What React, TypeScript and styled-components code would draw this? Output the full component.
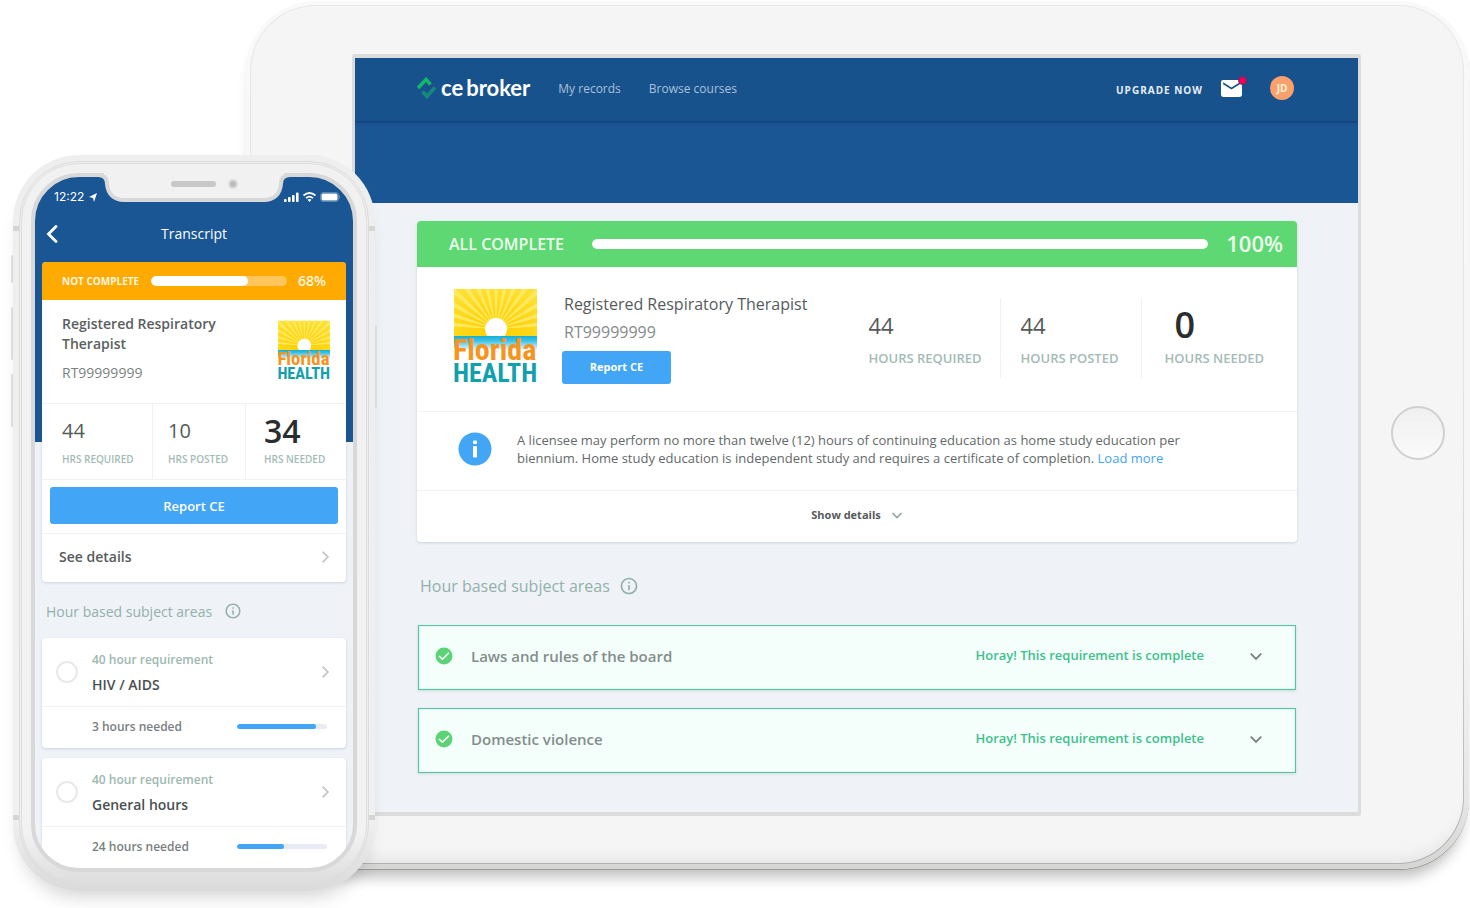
import React from "react";
import styled, { createGlobalStyle } from "styled-components";
import { MdInfoOutline } from "react-icons/md";

const blue = "#1a5694";
const mist = "#eff3f8";
const sky = "#42a5f5";
const sage = "#93b0aa";
const ink = "#555b5b";
const line = "#f0f2f3";

const GlobalStyle = createGlobalStyle`
  *, *::before, *::after { box-sizing: border-box; }
  body { margin: 0; background: #fff; font-family: "Open Sans", "Noto Sans", sans-serif; color: ${ink}; }
  button, input { font: inherit; color: inherit; margin: 0; }
  button { border: 0; background: none; padding: 0; cursor: pointer; }
  h1, h2, h3, p, dl, dt, dd { margin: 0; font-weight: 400; }
  a { text-decoration: none; color: inherit; }
  svg { display: block; flex: none; }
`;

const Stage = styled.main`
  display: flex;
  align-items: flex-start;
  min-height: 100vh;
  padding: 1px 1px 0 13px;
  overflow: hidden;
`;

/* ---------- tablet ---------- */

const TabletRim = styled.section`
  flex: 1;
  min-width: 0;
  padding: 4px 5px 5px 4px;
  border-radius: 70px;
  background: linear-gradient(#f9f9f9 0%, #f6f6f6 70%, #e6e6e6 92%, #d6d7d4 99%);
  box-shadow: 0 1px 0 #9a9a98, 0 14px 14px -6px rgba(0, 0, 0, 0.26);
`;

const TabletEdge = styled.div`
  padding: 1px;
  border-radius: 66px;
  background: linear-gradient(#e8e8e8 0%, #e2e2e2 50%, #bdbdbd 90%, #b0b0b0 100%);
`;

const TabletFace = styled.div`
  display: flex;
  align-items: center;
  padding: 48px 0 47px 101px;
  border-radius: 65px;
  background: #f5f5f5;
  box-shadow: inset 0 -14px 14px -8px rgba(0, 0, 0, 0.06);
`;

const TabletScreen = styled.div`
  flex: 1;
  min-width: 0;
  padding-bottom: 39px;
  border: 3px solid #dcdcdc;
  border-top-width: 4px;
  border-bottom-width: 4px;
  border-radius: 3px;
  background: ${mist};
`;

const TabletBezel = styled.div`
  display: flex;
  justify-content: center;
  width: 102px;
  padding: 0 0 4px 12px;
`;

const HomeButton = styled.button`
  width: 54px;
  height: 54px;
  border: 2px solid #d0d0d0;
  border-radius: 50%;
  background: linear-gradient(#f0f0f0, #fafafa);
`;

const NavBar = styled.header`
  display: flex;
  align-items: center;
  justify-content: space-between;
  height: 63px;
  padding: 0 64px 3px 62px;
  background: #18528d;
  box-shadow: 0 1px 3px rgba(0, 20, 60, 0.45);
  clip-path: inset(0 0 -6px 0);
  position: relative;
`;

const NavGroup = styled.nav`
  display: flex;
  align-items: center;
  gap: 28px;
`;

const Brand = styled.a`
  display: flex;
  align-items: center;
  gap: 5px;
  font: 700 22px/24px Lato, sans-serif;
  color: #fff;
`;

const BrandTail = styled.span`
  margin-left: 3px;
`;

const NavLink = styled.a`
  padding-top: 1px;
  font-size: 12px;
  line-height: 16px;
  color: #a9c0da;
`;

const Upgrade = styled.a`
  padding-top: 4px;
  font-size: 10px;
  line-height: 14px;
  font-weight: 700;
  letter-spacing: 1px;
  color: #e6eef7;
`;

const Account = styled.div`
  display: flex;
  align-items: center;
`;

const Mail = styled.button`
  position: relative;
  margin: 0 28px 0 18px;
`;

const MailDot = styled.span`
  position: absolute;
  top: -4px;
  right: -5px;
  width: 9px;
  height: 9px;
  border: 1px solid #5b2f72;
  border-radius: 50%;
  background: #f50057;
`;

const Avatar = styled.button`
  width: 24px;
  height: 24px;
  border-radius: 50%;
  background: #f9a06c;
  color: #fff3d6;
  font-size: 10px;
  font-weight: 700;
  line-height: 24px;
  text-align: center;
`;

const Hero = styled.div`
  height: 82px;
  background: ${blue};
`;

const TabletBody = styled.div`
  padding: 18px 61px 0 62px;
`;

const Card = styled.article`
  border-radius: 4px;
  background: #fff;
  box-shadow: 0 1px 3px rgba(60, 80, 110, 0.2);
  overflow: hidden;
`;

const StatusHead = styled.header<{ $tone: "done" | "open" }>`
  display: flex;
  align-items: center;
  height: ${(p) => (p.$tone === "done" ? 46 : 38)}px;
  padding: ${(p) => (p.$tone === "done" ? "0 14px 0 32px" : "0 20px")};
  gap: ${(p) => (p.$tone === "done" ? "0 18px" : "0 11px")};
  background: ${(p) => (p.$tone === "done" ? "#5dd872" : "#ffaa00")};
  color: #fff;
`;

const StatusName = styled.span<{ $big?: boolean }>`
  font-size: ${(p) => (p.$big ? 16 : 10)}px;
  line-height: 20px;
  padding-bottom: ${(p) => (p.$big ? 1 : 0)}px;
  font-weight: ${(p) => (p.$big ? 600 : 700)};
  margin-right: ${(p) => (p.$big ? 10 : 1)}px;
  color: ${(p) => (p.$big ? "#effff0" : "#fff6e2")};
`;

const StatusPercent = styled.span<{ $big?: boolean }>`
  font-size: ${(p) => (p.$big ? 22 : 14)}px;
  line-height: ${(p) => (p.$big ? 28 : 20)}px;
  padding-bottom: ${(p) => (p.$big ? 3 : 0)}px;
  font-weight: 600;
  color: ${(p) => (p.$big ? "#effff0" : "#fff6e2")};
`;

const Track = styled.div<{ $size: number; $color: string }>`
  flex: 1;
  height: ${(p) => p.$size}px;
  border-radius: 5px;
  background: ${(p) => p.$color};
  overflow: hidden;
`;

const Fill = styled.div<{ $color: string }>`
  height: 100%;
  border-radius: 5px;
  background: ${(p) => p.$color};
`;

const Summary = styled.div`
  display: flex;
  height: 144px;
  padding: 22px 0 0 37px;
`;

const Profile = styled.div`
  display: flex;
  flex-direction: column;
  align-items: flex-start;
  padding-top: 1px;
  margin-left: 25px;
`;

const ProfileText = styled.p<{ $soft?: boolean }>`
  padding: 0 2px;
  font-size: 16px;
  line-height: 28px;
  color: ${(p) => (p.$soft ? "#858a8a" : ink)};
`;

const ReportButton = styled.button<{ $wide?: boolean }>`
  width: ${(p) => (p.$wide ? "auto" : "109px")};
  height: ${(p) => (p.$wide ? 37 : 33)}px;
  margin: ${(p) => (p.$wide ? "7px 8px 9px" : "5px 0 0")};
  padding-bottom: ${(p) => (p.$wide ? 0 : 2)}px;
  border-radius: 3px;
  background: ${sky};
  color: #fff;
  font-size: ${(p) => (p.$wide ? 13 : 11)}px;
  font-weight: ${(p) => (p.$wide ? 600 : 700)};
`;

const Stats = styled.dl`
  display: flex;
  height: 80px;
  margin: 9px 33px 0 auto;
`;

const Stat = styled.div`
  display: flex;
  flex-direction: column-reverse;
  justify-content: flex-end;
  padding: 7px 22px 0 20px;
  &:first-child { padding-right: 18px; }
  &:last-child { padding-right: 0; padding-left: 23px; }
  & + & { border-left: 1px solid ${line}; }
`;

const StatLabel = styled.dt`
  padding-top: 7px;
  font-size: 13px;
  line-height: 18px;
  font-weight: 600;
  color: #a3bbb6;
`;

const StatValue = styled.dd<{ $strong?: boolean }>`
  height: 37px;
  padding-left: ${(p) => (p.$strong ? 10 : 0)}px;
  font-size: ${(p) => (p.$strong ? 36 : 22)}px;
  font-weight: ${(p) => (p.$strong ? 600 : 400)};
  line-height: 40px;
  color: ${(p) => (p.$strong ? "#2b2e2e" : ink)};
`;

const Notice = styled.div`
  display: flex;
  align-items: center;
  gap: 25px;
  height: 79px;
  padding: 0 100px 4px 41px;
  border-top: 1px solid ${line};
  font-size: 13px;
  line-height: 18px;
  color: #636969;
`;

const LoadMore = styled.a`
  color: ${sky};
`;

const ShowDetails = styled.button`
  display: flex;
  align-items: center;
  justify-content: center;
  gap: 10px;
  width: 100%;
  height: 52px;
  padding-bottom: 4px;
  border-top: 1px solid ${line};
  font-size: 11px;
  font-weight: 700;
`;

const SectionTitle = styled.h2<{ $small?: boolean }>`
  display: flex;
  align-items: center;
  gap: ${(p) => (p.$small ? 12 : 9)}px;
  height: ${(p) => (p.$small ? 56 : 83)}px;
  padding: 0 ${(p) => (p.$small ? 4 : 3)}px;
  padding-top: ${(p) => (p.$small ? 2 : 4)}px;
  font-size: ${(p) => (p.$small ? 14 : 16)}px;
  color: ${sage};
`;

const AreaList = styled.div`
  display: flex;
  flex-direction: column;
  gap: 18px;
  padding: 0 1px;
`;

const AreaRow = styled.button`
  display: flex;
  align-items: center;
  height: 65px;
  padding: 0 32px 4px 16px;
  border: 1px solid #55c4a0;
  background: #f4fffb;
  box-shadow: 0 1px 3px rgba(60, 120, 110, 0.2), inset 0 0 1px #55c4a0;
  text-align: left;
`;

const AreaName = styled.span`
  flex: 1;
  padding-left: 18px;
  font-size: 15px;
  font-weight: 600;
  color: #838d8b;
`;

const AreaState = styled.span`
  margin-right: 45px;
  padding-bottom: 2px;
  font-size: 13px;
  line-height: 18px;
  font-weight: 600;
  color: #3fc08c;
`;

/* ---------- phone ---------- */

const PhoneShell = styled.section`
  position: relative;
  flex: none;
  z-index: 1;
  width: 362px;
  margin: 154px -129px 0 0;
  padding: 6px;
  border-radius: 66px;
  background: linear-gradient(#eeeeee 0%, #f0f0f0 90%, #dadada 100%);
  box-shadow: 0 14px 20px -10px rgba(0, 0, 0, 0.2);
`;

const PhoneBand = styled.div`
  padding: 1px;
  border: 1px solid #dcdcdc;
  border-radius: 60px;
`;

const PhoneFace = styled.div`
  padding: 9px 9px 10px;
  border: 1px solid #dedede;
  border-radius: 58px;
  background: linear-gradient(#f1f1f1 0%, #f2f2f2 93%, #dedede 100%);
`;

const PhoneScreen = styled.div`
  height: 699px;
  border: 4px solid #d8d8d8;
  border-radius: 48px;
  background: linear-gradient(${blue} 265px, ${mist} 265px);
  overflow: hidden;
`;

const Notch = styled.svg`
  position: absolute;
  top: 17px;
  left: 83px;
`;

const SideKey = styled.span<{ $side: "left" | "right"; $top: number; $height: number }>`
  position: absolute;
  ${(p) => p.$side}: -2px;
  top: ${(p) => p.$top}px;
  width: 2px;
  height: ${(p) => p.$height}px;
  border-radius: 2px;
  background: #dcdcdc;
`;

const Antenna = styled.span<{ $side: "left" | "right"; $top: number }>`
  position: absolute;
  ${(p) => p.$side}: 0;
  top: ${(p) => p.$top}px;
  width: 6px;
  height: 5px;
  background: #d4d6d4;
`;

const PhoneStatus = styled.div`
  display: flex;
  align-items: center;
  justify-content: space-between;
  height: 40px;
  padding: 0 13px 0 19px;
  color: #fff;
  font: 400 12px/16px Inter, sans-serif;
`;

const IconRow = styled.span`
  display: flex;
  align-items: center;
  gap: 5px;
`;

const PhoneTitle = styled.div`
  display: grid;
  grid-template-columns: 18px 1fr 18px;
  align-items: center;
  height: 45px;
  padding: 0 10px 11px;
  color: #fff;
  font-size: 14px;
`;

const TitleText = styled.h1`
  font-size: 14px;
  line-height: 20px;
  font-weight: 400;
  text-align: center;
`;

const PhoneBody = styled.div`
  padding: 0 7px;
`;

const PhoneProfile = styled.div`
  display: flex;
  justify-content: space-between;
  height: 103px;
  padding: 14px 16px 0 20px;
`;

const PhoneName = styled.h2`
  width: 170px;
  font-size: 14px;
  line-height: 20px;
  font-weight: 600;
  color: #5a6060;
`;

const PhoneCode = styled.p`
  padding-top: 9px;
  font-size: 14px;
  line-height: 20px;
  color: #7c8282;
`;

const LogoSlot = styled.div`
  padding-top: 6px;
`;

const PhoneStats = styled.dl`
  display: grid;
  grid-template-columns: 110px 93px 1fr;
  height: 77px;
  border-top: 1px solid ${line};
  border-bottom: 1px solid ${line};
`;

const PhoneStat = styled.div`
  display: flex;
  flex-direction: column-reverse;
  justify-content: flex-end;
  padding: 7px 0 0 15px;
  &:first-child { padding-left: 20px; }
  &:last-child { padding-left: 18px; }
  & + & { border-left: 1px solid ${line}; }
`;

const PhoneStatLabel = styled.dt`
  font-size: 10px;
  line-height: 16px;
  font-weight: 600;
  padding-top: 2px;
  color: #a3bbb6;
`;

const PhoneStatValue = styled.dd<{ $strong?: boolean }>`
  height: 38px;
  font-size: ${(p) => (p.$strong ? 32 : 20)}px;
  font-weight: ${(p) => (p.$strong ? 600 : 400)};
  line-height: 40px;
  color: ${(p) => (p.$strong ? "#2b2e2e" : ink)};
`;

const PhoneActions = styled.div`
  display: grid;
`;

const SeeDetails = styled.button`
  display: flex;
  align-items: center;
  justify-content: space-between;
  width: 100%;
  height: 49px;
  padding: 0 14px 2px 17px;
  border-top: 1px solid ${line};
  font-size: 14px;
  line-height: 18px;
  font-weight: 600;
`;

const PhoneList = styled.div`
  display: flex;
  flex-direction: column;
  gap: 10px;
`;

const AreaTop = styled.div`
  display: flex;
  align-items: center;
  height: 68px;
  padding: 0 14px;
`;

const Tick = styled.input`
  appearance: none;
  flex: none;
  width: 22px;
  height: 22px;
  border: 2px solid #e6e9ec;
  border-radius: 50%;
  background: #fff;
`;

const AreaLabel = styled.label`
  flex: 1;
  padding: 0 0 0 14px;
`;

const AreaNeed = styled.span`
  display: block;
  font-size: 12px;
  line-height: 25px;
  font-weight: 600;
  color: #9db7b1;
`;

const AreaTitle = styled.span`
  display: block;
  font-size: 14px;
  line-height: 25px;
  font-weight: 600;
  color: #4a5050;
`;

const AreaFoot = styled.div`
  display: flex;
  align-items: center;
  justify-content: space-between;
  height: 42px;
  padding: 0 19px 2px 50px;
  border-top: 1px solid ${line};
  font-size: 12px;
  font-weight: 600;
  color: #7a8080;
`;

const MiniMeter = styled.div`
  display: flex;
  width: 90px;
`;

/* ---------- drawings ---------- */

function BrandMark() {
  return (
    <svg width="19" height="22" viewBox="0 0 19 22" aria-hidden="true" fill="none">
      <path d="M1 11 9 2.500 13.500 7.500" stroke="#12b76a" strokeWidth="3.600" />
      <path d="M18 10.500 10 19.500 5.500 14.500" stroke="#158a7c" strokeWidth="3.600" />
    </svg>
  );
}

const LogoWord = styled.text`
  font-family: "Roboto Condensed", Lato, sans-serif;
  font-weight: 700;
`;

function FloridaHealth({ width, height, id }: { width: number; height: number; id: string }) {
  const rays = Array.from({ length: 15 }, (_, i) => {
    const a = Math.PI + ((i + 0.5) * Math.PI) / 15;
    const w = 0.045;
    return `M42 40 L${42 + 90 * Math.cos(a - w)} ${40 + 90 * Math.sin(a - w)} L${42 + 90 * Math.cos(a + w)} ${40 + 90 * Math.sin(a + w)} Z`;
  }).join(" ");
  return (
    <svg width={width} height={height} viewBox="0 0 83 94" overflow="visible" role="img" aria-label="Florida Health">
      <defs>
        <linearGradient id={`${id}-sea`} x1="0" y1="0" x2="0" y2="1">
          <stop offset="0" stopColor="#12b0da" />
          <stop offset="0.3" stopColor="#3cc0e2" />
          <stop offset="1" stopColor="#ffffff" />
        </linearGradient>
        <radialGradient id={`${id}-glow`} cx="0.5" cy="0.85" r="0.9">
          <stop offset="0" stopColor="#ffcf00" />
          <stop offset="1" stopColor="#ffe033" />
        </radialGradient>
        <clipPath id={`${id}-sky`}>
          <rect width="83" height="47" />
        </clipPath>
      </defs>
      <g clipPath={`url(#${id}-sky)`}>
        <rect width="83" height="47" fill={`url(#${id}-glow)`} />
        <path d={rays} fill="#ffe95e" />
        <circle cx="42" cy="40" r="11" fill="#fff" />
      </g>
      <rect y="47" width="83" height="15" fill={`url(#${id}-sea)`} />
      <LogoWord x="-1" y="71" fontSize="30" fill="#f7941d">Florida</LogoWord>
      <LogoWord x="-1" y="93" fontSize="26" fill="#12a0ae">HEALTH</LogoWord>
    </svg>
  );
}

function Chevron({ dir, color, size = 12 }: { dir: "left" | "right" | "down"; color: string; size?: number }) {
  const d = dir === "down" ? "M1.500 4 6 8.500 10.500 4" : dir === "right" ? "M4 1.500 8.500 6 4 10.500" : "M8 1 3 6 8 11";
  return (
    <svg width={size} height={size} viewBox="0 0 12 12" fill="none" stroke={color} strokeWidth="1.600" aria-hidden="true">
      <path d={d} />
    </svg>
  );
}

function CheckDisc() {
  return (
    <svg width="18" height="18" viewBox="0 0 18 18" aria-hidden="true">
      <circle cx="9" cy="9" r="8.500" fill="#5dd377" />
      <path d="M4 9 7.400 12.200 14 5.800" fill="none" stroke="#fff" strokeWidth="1.600" />
    </svg>
  );
}

function InfoDisc() {
  return (
    <svg width="34" height="34" viewBox="0 0 34 34" aria-hidden="true">
      <circle cx="17" cy="17" r="16.500" fill={sky} />
      <rect x="15" y="8.500" width="4" height="3.500" rx="1" fill="#fff" />
      <rect x="15" y="14" width="4" height="11.500" rx="1" fill="#fff" />
    </svg>
  );
}

function StatusIcons() {
  return (
    <svg width="57" height="12" viewBox="0 0 57 12" aria-hidden="true" fill="#fff">
      <rect x="1" y="8" width="2.600" height="3" rx="1" />
      <rect x="5" y="6" width="2.600" height="5" rx="1" />
      <rect x="9" y="4" width="2.600" height="7" rx="1" />
      <rect x="13" y="1.500" width="2.600" height="9.500" rx="1" />
      <g fill="none" stroke="#fff" strokeWidth="1.700">
        <path d="M20.500 4.500Q26.500 -0.500 32.500 4.500" />
        <path d="M23 7.200Q26.500 4.200 30 7.200" />
      </g>
      <path d="M24.500 8.800Q26.500 7.200 28.500 8.800L26.500 11Z" />
      <rect x="37.500" y="1.500" width="18" height="9" rx="2.500" fill="none" stroke="#5d87b3" />
      <rect x="38.500" y="2.500" width="16" height="7" rx="1.500" />
      <rect x="56" y="4.500" width="1" height="3" fill="#5d87b3" />
    </svg>
  );
}

/* ---------- screens ---------- */

type Meter = { label: string; value: number; size: number; track: string; fill: string };

function Progress({ label, value, size, track, fill }: Meter) {
  return (
    <Track role="progressbar" aria-label={label} aria-valuenow={value} aria-valuemin={0} aria-valuemax={100} $size={size} $color={track}>
      <Fill $color={fill} style={{ width: `${value}%` }} />
    </Track>
  );
}

const tabletStats = [
  { value: "44", label: "HOURS REQUIRED" },
  { value: "44", label: "HOURS POSTED" },
  { value: "0", label: "HOURS NEEDED", strong: true },
];

const phoneStats = [
  { value: "44", label: "HRS REQUIRED" },
  { value: "10", label: "HRS POSTED" },
  { value: "34", label: "HRS NEEDED", strong: true },
];

const phoneAreas = [
  { id: "hiv", name: "HIV / AIDS", needed: "3 hours needed", value: 88 },
  { id: "general", name: "General hours", needed: "24 hours needed", value: 52 },
];

function Tablet() {
  return (
    <TabletRim>
      <TabletEdge>
        <TabletFace>
          <TabletScreen>
            <NavBar>
              <NavGroup>
                <Brand href="#home">
                  <BrandMark />
                  <span>
                    ce<BrandTail>broker</BrandTail>
                  </span>
                </Brand>
                <NavLink href="#records">My records</NavLink>
                <NavLink href="#courses">Browse courses</NavLink>
              </NavGroup>
              <Account>
                <Upgrade href="#upgrade">UPGRADE NOW</Upgrade>
                <Mail aria-label="Messages">
                  <svg width="21" height="17" viewBox="2 4 20 16" fill="#fff" aria-hidden="true">
                    <path d="M20 4H4a2 2 0 0 0-2 2v12a2 2 0 0 0 2 2h16a2 2 0 0 0 2-2V6a2 2 0 0 0-2-2zm0 4-8 5-8-5V6l8 5 8-5z" />
                  </svg>
                  <MailDot />
                </Mail>
                <Avatar>JD</Avatar>
              </Account>
            </NavBar>
            <Hero />
            <TabletBody>
              <Card>
                <StatusHead $tone="done">
                  <StatusName $big>ALL COMPLETE</StatusName>
                  <Progress label="Completion" value={100} size={10} track="#8ee59c" fill="#fff" />
                  <StatusPercent $big>100%</StatusPercent>
                </StatusHead>
                <Summary>
                  <FloridaHealth width={83} height={94} id="tablet" />
                  <Profile>
                    <ProfileText>Registered Respiratory Therapist</ProfileText>
                    <ProfileText $soft>RT99999999</ProfileText>
                    <ReportButton>Report CE</ReportButton>
                  </Profile>
                  <Stats>
                    {tabletStats.map((s) => (
                      <Stat key={s.label}>
                        <StatLabel>{s.label}</StatLabel>
                        <StatValue $strong={s.strong}>{s.value}</StatValue>
                      </Stat>
                    ))}
                  </Stats>
                </Summary>
                <Notice>
                  <InfoDisc />
                  <p>
                    A licensee may perform no more than twelve (12) hours of continuing education as home study education per
                    biennium. Home study education is independent study and requires a certificate of completion.{" "}
                    <LoadMore href="#more">Load more</LoadMore>
                  </p>
                </Notice>
                <ShowDetails>
                  Show details
                  <Chevron dir="down" color="#8fa5a1" />
                </ShowDetails>
              </Card>
              <SectionTitle>
                Hour based subject areas
                <MdInfoOutline size={20} />
              </SectionTitle>
              <AreaList>
                {["Laws and rules of the board", "Domestic violence"].map((name) => (
                  <AreaRow key={name}>
                    <CheckDisc />
                    <AreaName>{name}</AreaName>
                    <AreaState>Horay! This requirement is complete</AreaState>
                    <Chevron dir="down" color="#788280" size={14} />
                  </AreaRow>
                ))}
              </AreaList>
            </TabletBody>
          </TabletScreen>
          <TabletBezel>
            <HomeButton aria-label="Home" />
          </TabletBezel>
        </TabletFace>
      </TabletEdge>
    </TabletRim>
  );
}

function Phone() {
  return (
    <PhoneShell>
      <SideKey $side="left" $top={100} $height={28} />
      <SideKey $side="left" $top={152} $height={53} />
      <SideKey $side="left" $top={219} $height={53} />
      <SideKey $side="right" $top={170} $height={84} />
      <Antenna $side="left" $top={71} />
      <Antenna $side="right" $top={71} />
      <Antenna $side="left" $top={660} />
      <Antenna $side="right" $top={660} />
      <PhoneBand>
        <PhoneFace>
          <PhoneScreen>
            <PhoneStatus>
              <IconRow>
                12:22
                <svg width="8" height="9" viewBox="0 0 8 9" fill="#fff" aria-hidden="true">
                  <path d="M8 0 5 9 4 5 0 4Z" />
                </svg>
              </IconRow>
              <StatusIcons />
            </PhoneStatus>
            <PhoneTitle>
              <button aria-label="Back">
                <svg width="14" height="18" viewBox="0 0 14 18" fill="none" stroke="#fff" strokeWidth="2.800" strokeLinecap="round" aria-hidden="true">
                  <path d="M11 1.500 3.500 9 11 16.500" />
                </svg>
              </button>
              <TitleText>Transcript</TitleText>
            </PhoneTitle>
            <PhoneBody>
              <Card>
                <StatusHead $tone="open">
                  <StatusName>NOT COMPLETE</StatusName>
                  <Progress label="Completion" value={71} size={10} track="#ffc65c" fill="#fff" />
                  <StatusPercent>68%</StatusPercent>
                </StatusHead>
                <PhoneProfile>
                  <div>
                    <PhoneName>Registered Respiratory Therapist</PhoneName>
                    <PhoneCode>RT99999999</PhoneCode>
                  </div>
                  <LogoSlot>
                    <FloridaHealth width={52} height={60} id="phone" />
                  </LogoSlot>
                </PhoneProfile>
                <PhoneStats>
                  {phoneStats.map((s) => (
                    <PhoneStat key={s.label}>
                      <PhoneStatLabel>{s.label}</PhoneStatLabel>
                      <PhoneStatValue $strong={s.strong}>{s.value}</PhoneStatValue>
                    </PhoneStat>
                  ))}
                </PhoneStats>
                <PhoneActions>
                  <ReportButton $wide>Report CE</ReportButton>
                  <SeeDetails>
                    See details
                    <Chevron dir="right" color="#c6cbcb" size={14} />
                  </SeeDetails>
                </PhoneActions>
              </Card>
              <SectionTitle $small>
                Hour based subject areas
                <MdInfoOutline size={18} />
              </SectionTitle>
              <PhoneList>
                {phoneAreas.map((a) => (
                  <Card key={a.id}>
                    <AreaTop>
                      <Tick type="checkbox" id={a.id} />
                      <AreaLabel htmlFor={a.id}>
                        <AreaNeed>40 hour requirement</AreaNeed>
                        <AreaTitle>{a.name}</AreaTitle>
                      </AreaLabel>
                      <Chevron dir="right" color="#c6cbcb" size={14} />
                    </AreaTop>
                    <AreaFoot>
                      {a.needed}
                      <MiniMeter>
                        <Progress label={a.name} value={a.value} size={5} track="#e8ebf3" fill={sky} />
                      </MiniMeter>
                    </AreaFoot>
                  </Card>
                ))}
              </PhoneList>
            </PhoneBody>
          </PhoneScreen>
        </PhoneFace>
      </PhoneBand>
      <Notch width="196" height="32" viewBox="0 0 196 32" aria-hidden="true">
        <path d="M2 3C9 3 11 7 11 12C12 22 18 28 28 28H168C178 28 184 22 185 12C185 7 187 3 194 3" fill="#f1f1f1" stroke="#d8d8d8" strokeWidth="4" />
        <path d="M8 0H188V3H8Z" fill="#f1f1f1" />
        <rect x="75" y="9" width="45" height="6" rx="3" fill="#c8c8c8" />
        <circle cx="137" cy="12" r="5" fill="#dcdcdc" />
        <circle cx="137" cy="12" r="3" fill="#bcbcbc" />
      </Notch>
    </PhoneShell>
  );
}

export default function App() {
  return (
    <>
      <GlobalStyle />
      <Stage>
        <Phone />
        <Tablet />
      </Stage>
    </>
  );
}
